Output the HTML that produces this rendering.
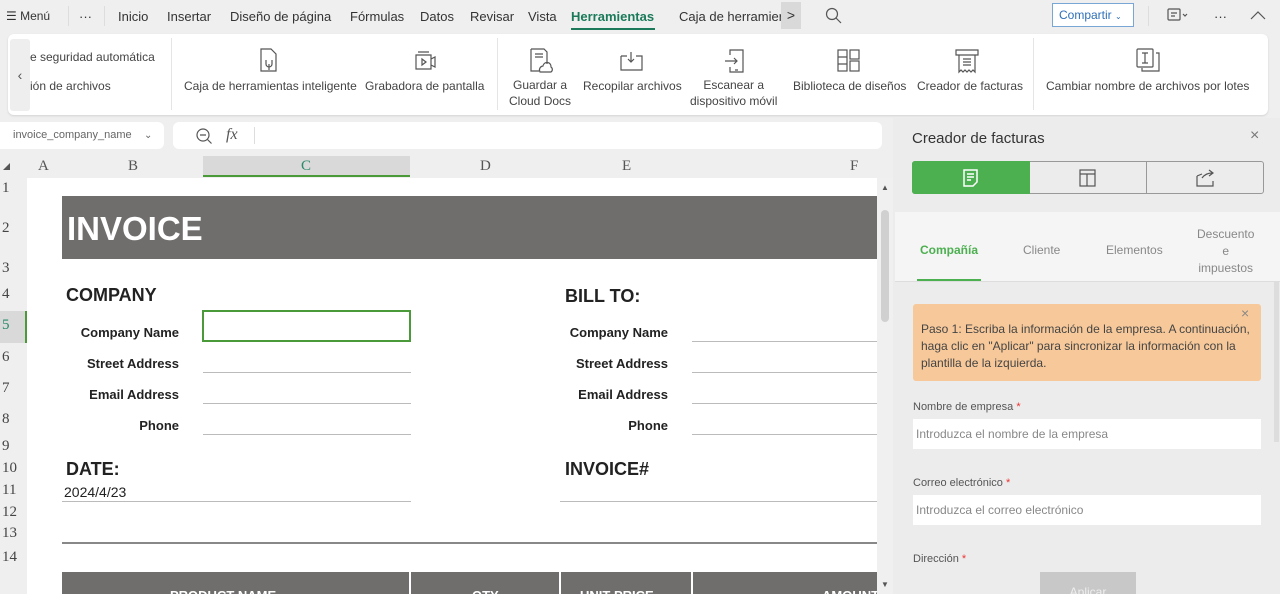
<!DOCTYPE html>
<html><head><meta charset="utf-8"><style>
*{margin:0;padding:0;box-sizing:border-box}
html,body{width:1280px;height:594px;overflow:hidden}
body{background:#efefef;font-family:"Liberation Sans",sans-serif;position:relative;color:#333}
.a{position:absolute;white-space:nowrap}
.tab{font-size:13px;color:#333;top:9px}
.rb{font-size:12px;color:#444;text-align:center}
.ic{position:absolute;stroke:#555;fill:none;stroke-width:1.2}
.rh{position:absolute;left:0;width:26px;font-family:"Liberation Serif",serif;font-size:15px;color:#444;padding-left:2px}
.ch{position:absolute;top:158px;font-family:"Liberation Serif",serif;font-size:15px;color:#555}
.lbl{position:absolute;font-weight:bold;font-size:13px;color:#222;text-align:right}
.ln{position:absolute;height:1px;background:#bbb}
.h{position:absolute;font-weight:bold;font-size:18px;color:#222}
.th{position:absolute;top:588px;font-weight:bold;font-size:13px;color:#fff}
</style></head><body>
<div class="a tab" style="left:6px;font-size:12px">☰ Menú</div>
<div class="a" style="left:68px;top:6px;width:1px;height:20px;background:#ddd"></div>
<div class="a tab" style="left:79px">···</div>
<div class="a" style="left:104px;top:6px;width:1px;height:20px;background:#ddd"></div>
<div class="a tab" style="left:118px">Inicio</div>
<div class="a tab" style="left:167px">Insertar</div>
<div class="a tab" style="left:230px">Diseño de página</div>
<div class="a tab" style="left:350px">Fórmulas</div>
<div class="a tab" style="left:420px">Datos</div>
<div class="a tab" style="left:470px">Revisar</div>
<div class="a tab" style="left:528px">Vista</div>
<div class="a tab" style="left:571px;color:#1a7a5a;font-weight:bold">Herramientas</div>
<div class="a" style="left:571px;top:28px;width:84px;height:2px;background:#1a7a5a"></div>
<div class="a tab" style="left:679px">Caja de herramier</div>
<div class="a" style="left:781px;top:2px;width:20px;height:27px;background:#d9d9d9;font-size:14px;text-align:center;line-height:27px">&gt;</div>
<svg class="ic" style="left:825px;top:7px" width="18" height="18"><circle cx="7" cy="7" r="5.5"/><path d="M11 11l5 5"/></svg>
<div class="a" style="left:1052px;top:3px;width:82px;height:24px;border:1px solid #7aa6d6;background:#fff;color:#2f6fb8;font-size:12px;line-height:22px;padding-left:6px">Compartir <span style="font-size:8px">⌄</span></div>
<div class="a" style="left:1148px;top:6px;width:1px;height:20px;background:#ddd"></div>
<svg class="ic" style="left:1167px;top:8px" width="22" height="16"><rect x="1" y="1" width="12" height="11" rx="1"/><path d="M4 5h6M4 8h4M16 6l2 2 2-2"/></svg>
<div class="a tab" style="left:1214px">···</div>
<svg class="ic" style="left:1250px;top:9px" width="16" height="12"><path d="M1 10l7-7 7 7"/></svg>
<div class="a" style="left:8px;top:34px;width:1260px;height:81px;background:#fff;border-radius:6px;box-shadow:0 1px 2px rgba(0,0,0,.12)"></div>
<div class="a" style="left:10px;top:39px;width:20px;height:72px;background:#eee;border-radius:3px;text-align:center;line-height:72px;font-size:14px;color:#555">‹</div>
<div class="a rb" style="left:30px;top:50px">e seguridad automática</div>
<div class="a rb" style="left:30px;top:79px">ión de archivos</div>
<div class="a" style="left:171px;top:38px;width:1px;height:72px;background:#e5e5e5"></div>
<div class="a" style="left:497px;top:38px;width:1px;height:72px;background:#e5e5e5"></div>
<div class="a" style="left:1033px;top:38px;width:1px;height:72px;background:#e5e5e5"></div>
<svg class="ic" style="left:258px;top:48px" width="22" height="26"><path d="M3 1h10l5 5v17H3z M8 12v4a3 3 0 0 0 6 0v-4M11 16v6"/></svg>
<div class="a rb" style="left:184px;top:79px">Caja de herramientas inteligente</div>
<svg class="ic" style="left:413px;top:50px" width="24" height="22"><path d="M5 2h11M3 5h15v14H3zM18 9l4-2v10l-4-2M9 9l4 3-4 3z"/></svg>
<div class="a rb" style="left:365px;top:79px">Grabadora de pantalla</div>
<svg class="ic" style="left:528px;top:48px" width="26" height="28"><path d="M3 1h13l3 3v12M3 1v22h8M7 6h8M7 9h8"/><path d="M12 24a4 4 0 0 1 3-6 4 4 0 0 1 8 1 3 3 0 0 1 0 5z"/></svg>
<div class="a rb" style="left:509px;top:77px;line-height:16px">Guardar a<br>Cloud Docs</div>
<svg class="ic" style="left:619px;top:50px" width="26" height="22"><path d="M2 6h6M17 6h6v14H2V6M12 2v10M9 9l3 3 3-3"/></svg>
<div class="a rb" style="left:583px;top:79px">Recopilar archivos</div>
<svg class="ic" style="left:724px;top:48px" width="24" height="28"><path d="M6 7V2h13v22H6v-5M1 13h12M10 10l3 3-3 3M11 22h3"/></svg>
<div class="a rb" style="left:690px;top:77px;line-height:16px">Escanear a<br>dispositivo móvil</div>
<svg class="ic" style="left:837px;top:49px" width="24" height="24"><rect x="1" y="1" width="9" height="21"/><rect x="13" y="1" width="9" height="9"/><rect x="13" y="12" width="9" height="10"/><path d="M1 8h9M1 15h9"/></svg>
<div class="a rb" style="left:793px;top:79px">Biblioteca de diseños</div>
<svg class="ic" style="left:955px;top:48px" width="26" height="28"><path d="M1 2h22v5H1zM4 7v17l2-2 2 2 2-2 2 2 2-2 2 2 2-2 2 2V7M8 11h8M8 14h8M8 17h8"/></svg>
<div class="a rb" style="left:917px;top:79px">Creador de facturas</div>
<svg class="ic" style="left:1136px;top:48px" width="26" height="26"><rect x="1" y="1" width="16" height="18" rx="1"/><path d="M20 5h3v18H6v-3M6 5h6M9 5v10M6 15h6"/></svg>
<div class="a rb" style="left:1046px;top:79px">Cambiar nombre de archivos por lotes</div>
<div class="a" style="left:0;top:122px;width:164px;height:27px;background:#fff;border-radius:0 6px 6px 0;font-size:11px;color:#666;line-height:27px;padding-left:13px">invoice_company_name<span style="position:absolute;left:144px;font-size:10px">⌄</span></div>
<div class="a" style="left:173px;top:122px;width:709px;height:27px;background:#fff;border-radius:6px"></div>
<svg class="ic" style="left:195px;top:127px" width="18" height="18"><circle cx="8" cy="8" r="6"/><path d="M5 8h6M12.5 12.5l4 4"/></svg>
<div class="a" style="left:226px;top:126px;font-family:'Liberation Serif',serif;font-style:italic;font-size:16px;color:#555">fx</div>
<div class="a" style="left:254px;top:127px;width:1px;height:17px;background:#ddd"></div>
<div class="a" style="left:203px;top:156px;width:207px;height:21px;background:#d9d9d9;border-bottom:2px solid #4a9a3a"></div>
<div class="a" style="left:3px;top:163px;width:0;height:0;border-left:7px solid transparent;border-bottom:7px solid #555"></div>
<div class="ch" style="left:38px">A</div>
<div class="ch" style="left:128px">B</div>
<div class="ch" style="left:301px;color:#2a8a6a">C</div>
<div class="ch" style="left:480px">D</div>
<div class="ch" style="left:622px">E</div>
<div class="ch" style="left:850px">F</div>
<div class="a" style="left:27px;top:178px;width:850px;height:416px;background:#fff"></div>
<div class="a" style="left:877px;top:178px;width:16px;height:416px;background:#f0f0f0"></div>
<div class="a" style="left:881px;top:210px;width:8px;height:112px;background:#d0d0d0;border-radius:4px"></div>
<div class="a" style="left:881px;top:183px;font-size:8px;color:#555">▲</div>
<div class="a" style="left:881px;top:580px;font-size:8px;color:#555">▼</div>
<div class="rh" style="top:180px">1</div>
<div class="rh" style="top:220px">2</div>
<div class="rh" style="top:260px">3</div>
<div class="rh" style="top:286px">4</div>
<div class="a" style="left:0;top:311px;width:27px;height:32px;background:#d9d9d9;border-right:2px solid #4a9a3a"></div>
<div class="rh" style="top:317px;color:#2a8a6a">5</div>
<div class="rh" style="top:349px">6</div>
<div class="rh" style="top:380px">7</div>
<div class="rh" style="top:411px">8</div>
<div class="rh" style="top:438px">9</div>
<div class="rh" style="top:460px">10</div>
<div class="rh" style="top:482px">11</div>
<div class="rh" style="top:504px">12</div>
<div class="rh" style="top:525px">13</div>
<div class="rh" style="top:549px">14</div>
<div class="a" style="left:62px;top:196px;width:815px;height:63px;background:#706e6d"></div>
<div class="a" style="left:67px;top:210px;font-weight:bold;font-size:33px;color:#fff">INVOICE</div>
<div class="h" style="left:66px;top:285px">COMPANY</div>
<div class="h" style="left:565px;top:286px">BILL TO:</div>
<div class="lbl" style="right:1101px;top:325px">Company Name</div>
<div class="lbl" style="right:1101px;top:356px">Street Address</div>
<div class="lbl" style="right:1101px;top:387px">Email Address</div>
<div class="lbl" style="right:1101px;top:418px">Phone</div>
<div class="lbl" style="right:612px;top:325px">Company Name</div>
<div class="lbl" style="right:612px;top:356px">Street Address</div>
<div class="lbl" style="right:612px;top:387px">Email Address</div>
<div class="lbl" style="right:612px;top:418px">Phone</div>
<div class="a" style="left:202px;top:310px;width:209px;height:32px;border:2px solid #4a9a3a"></div>
<div class="ln" style="left:203px;top:372px;width:208px"></div>
<div class="ln" style="left:203px;top:403px;width:208px"></div>
<div class="ln" style="left:203px;top:434px;width:208px"></div>
<div class="ln" style="left:692px;top:341px;width:185px"></div>
<div class="ln" style="left:692px;top:372px;width:185px"></div>
<div class="ln" style="left:692px;top:403px;width:185px"></div>
<div class="ln" style="left:692px;top:434px;width:185px"></div>
<div class="h" style="left:66px;top:459px">DATE:</div>
<div class="h" style="left:565px;top:459px">INVOICE#</div>
<div class="a" style="left:64px;top:484px;font-size:14px;color:#222">2024/4/23</div>
<div class="ln" style="left:62px;top:501px;width:349px"></div>
<div class="ln" style="left:560px;top:501px;width:317px"></div>
<div class="a" style="left:62px;top:542px;width:815px;height:2px;background:#888"></div>
<div class="a" style="left:62px;top:572px;width:815px;height:22px;background:#706e6d;overflow:hidden"></div>
<div class="th" style="left:170px">PRODUCT NAME</div>
<div class="th" style="left:472px">QTY</div>
<div class="th" style="left:580px">UNIT PRICE</div>
<div class="th" style="left:822px">AMOUNT</div>
<div class="a" style="left:409px;top:572px;width:2px;height:22px;background:#fff"></div>
<div class="a" style="left:559px;top:572px;width:2px;height:22px;background:#fff"></div>
<div class="a" style="left:691px;top:572px;width:2px;height:22px;background:#fff"></div>
<div class="a" style="left:877px;top:572px;width:16px;height:22px;background:#f0f0f0"></div>
<div class="a" style="left:881px;top:580px;font-size:8px;color:#555">▼</div>
<div class="a" style="left:893px;top:118px;width:387px;height:476px;background:#ececec"></div>
<div class="a" style="left:912px;top:130px;font-size:15px;color:#333">Creador de facturas</div>
<div class="a" style="left:1250px;top:127px;font-size:16px;color:#777">×</div>
<div class="a" style="left:912px;top:161px;width:352px;height:33px;border:1px solid #999;border-radius:3px;background:#ececec"></div>
<div class="a" style="left:912px;top:161px;width:118px;height:33px;background:#4caf50;border-radius:3px 0 0 3px"></div>
<div class="a" style="left:1146px;top:162px;width:1px;height:31px;background:#999"></div>
<svg class="ic" style="left:962px;top:168px;stroke:#fff;stroke-width:1.5" width="18" height="20"><path d="M2 2h13v12l-4 4H2zM5 6h7M5 9h7M5 12h4"/></svg>
<svg class="ic" style="left:1079px;top:168px" width="18" height="20"><rect x="1" y="2" width="15" height="16"/><path d="M1 6h15M8 6v12"/></svg>
<svg class="ic" style="left:1195px;top:168px" width="22" height="20"><path d="M2 8v10h16v-5M2 8l5-2M7 10c3-4 7-5 10-5M14 2l4 3-4 3"/></svg>
<div class="a" style="left:895px;top:212px;width:385px;height:70px;background:#f5f5f5;border-bottom:1px solid #ddd"></div>
<div class="a" style="left:920px;top:243px;font-size:12px;font-weight:bold;color:#4caf50">Compañía</div>
<div class="a" style="left:917px;top:279px;width:64px;height:2px;background:#4caf50"></div>
<div class="a" style="left:1023px;top:243px;font-size:12px;color:#888">Cliente</div>
<div class="a" style="left:1106px;top:243px;font-size:12px;color:#888">Elementos</div>
<div class="a" style="left:1197px;top:226px;font-size:12px;color:#888;text-align:center;line-height:17px">Descuento<br>e<br>impuestos</div>
<div class="a" style="left:913px;top:304px;width:348px;height:77px;background:#f7c99a;border-radius:3px"></div>
<div class="a" style="left:1241px;top:305px;font-size:14px;color:#888">×</div>
<div class="a" style="left:921px;top:321px;font-size:12px;color:#444;line-height:17px;white-space:normal;width:335px">Paso 1: Escriba la información de la empresa. A continuación, haga clic en "Aplicar" para sincronizar la información con la plantilla de la izquierda.</div>
<div class="a" style="left:913px;top:401px;font-size:11px;color:#555">Nombre de empresa <span style="color:#e33">*</span></div>
<div class="a" style="left:913px;top:419px;width:348px;height:30px;background:#fff;font-size:12px;color:#888;line-height:30px;padding-left:3px">Introduzca el nombre de la empresa</div>
<div class="a" style="left:913px;top:477px;font-size:11px;color:#555">Correo electrónico <span style="color:#e33">*</span></div>
<div class="a" style="left:913px;top:495px;width:348px;height:30px;background:#fff;font-size:12px;color:#888;line-height:30px;padding-left:3px">Introduzca el correo electrónico</div>
<div class="a" style="left:913px;top:553px;font-size:11px;color:#555;height:9px;overflow:hidden">Dirección <span style="color:#e33">*</span></div>
<div class="a" style="left:1040px;top:572px;width:96px;height:22px;background:#c8c8c8;color:#eee;font-size:12px;text-align:center;padding-top:13px;overflow:hidden">Aplicar</div>
<div class="a" style="left:1274px;top:282px;width:5px;height:160px;background:#ddd"></div>
</body></html>
